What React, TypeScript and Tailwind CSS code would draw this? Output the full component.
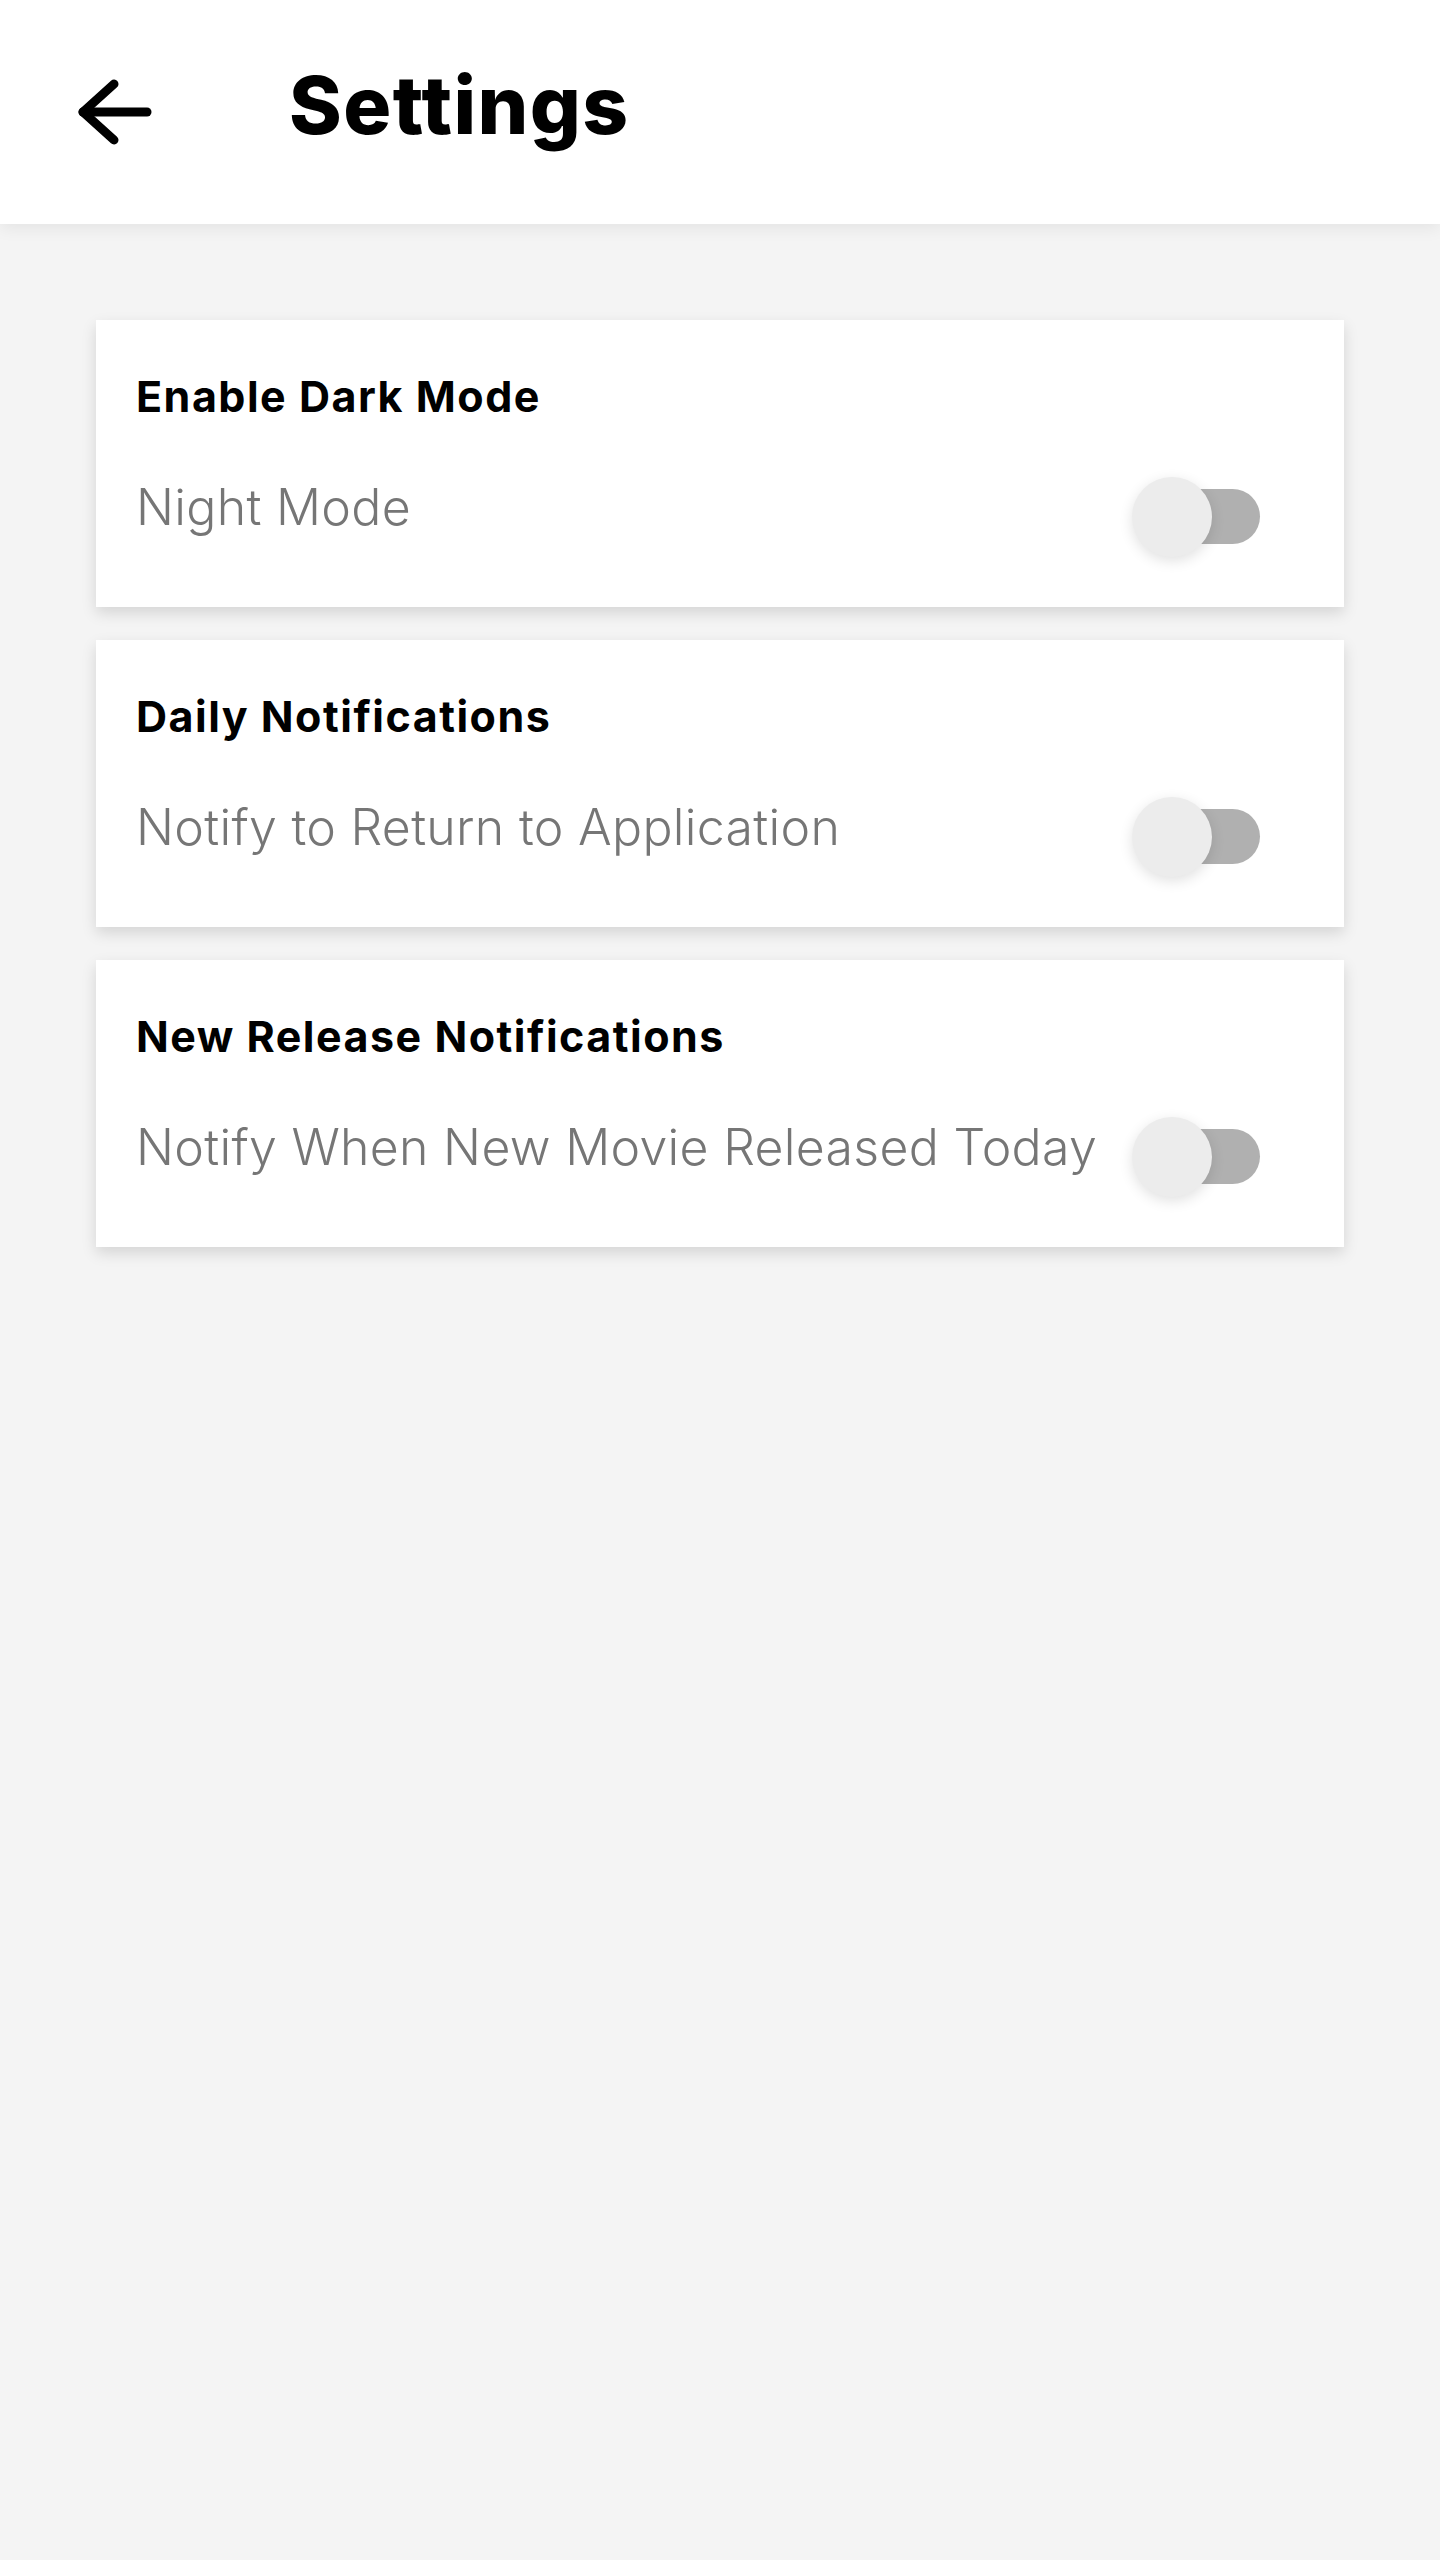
const settings = [
  { title: 'Enable Dark Mode', subtitle: 'Night Mode' },
  { title: 'Daily Notifications', subtitle: 'Notify to Return to Application' },
  { title: 'New Release Notifications', subtitle: 'Notify When New Movie Released Today' },
];

function BackArrow() {
  return (
    <svg width="76" height="66" viewBox="0 0 76 66" fill="none" stroke="#000" strokeWidth="9" strokeLinecap="round" strokeLinejoin="round">
      <polyline points="37,5 6,33 37,61" />
      <line x1="6" y1="33" x2="70" y2="33" />
    </svg>
  );
}

function Toggle() {
  return (
    <div className="relative w-[128px] h-[80px] shrink-0">
      <div className="absolute left-[14px] top-[12px] w-[114px] h-[55px] rounded-full bg-[#b0b0b0]" />
      <div className="absolute left-0 top-0 w-[80px] h-[80px] rounded-full bg-[#ececec] shadow-[0_4px_14px_rgba(0,0,0,0.12)]" />
    </div>
  );
}

export default function App() {
  return (
    <div className="min-h-[2560px] bg-[#f4f4f4] font-['Inter',sans-serif]">
      <header className="h-[224px] bg-white flex items-center shadow-[0_4px_16px_rgba(0,0,0,0.07)] relative z-10">
        <button className="ml-[77px] w-[76px] h-[66px] flex items-center justify-center">
          <BackArrow />
        </button>
        <h1 className="ml-[136px] text-[80px] leading-none font-extrabold text-black tracking-[1.4px] -mt-[14px]">Settings</h1>
      </header>

      <main className="px-[96px] pt-[96px] flex flex-col gap-[33px]">
        {settings.map((s) => (
          <div key={s.title} className="h-[287px] bg-white shadow-[0_6px_14px_rgba(0,0,0,0.13)] pl-[40px] pr-[84px] pt-[51px]">
            <div className="text-[43px] leading-[1.2] font-bold text-black tracking-[1.5px]">{s.title}</div>
            <div className="mt-[54px] flex items-start justify-between">
              <span className="text-[50px] leading-[1.2] font-light text-[#767676] tracking-[0.3px]">{s.subtitle}</span>
              <Toggle />
            </div>
          </div>
        ))}
      </main>
    </div>
  );
}
